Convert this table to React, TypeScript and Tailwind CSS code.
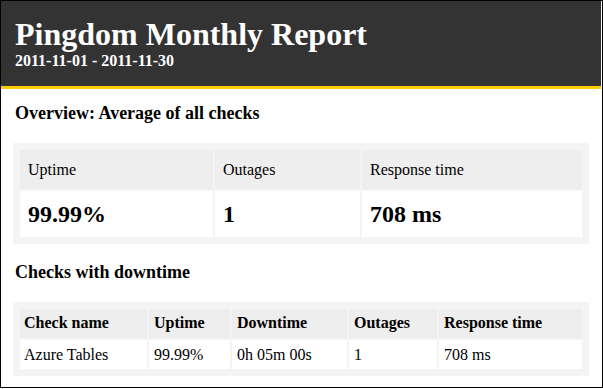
import React from "react";

interface CheckRow {
  name: string;
  uptime: string;
  downtime: string;
  outages: string;
  response: string;
}

const overview = { uptime: "99.99%", outages: "1", response: "708 ms" };

const checks: CheckRow[] = [
  { name: "Azure Tables", uptime: "99.99%", downtime: "0h 05m 00s", outages: "1", response: "708 ms" },
];

export default function App() {
  return (
    <div className="w-[603px] h-[388px] border border-black bg-white text-black font-[family-name:Liberation_Serif,Times_New_Roman,serif] overflow-hidden">
      {/* header */}
      <div className="mr-[1px] bg-[#333333] border-b-[3px] border-[#ffcc00] pl-[14px] pt-[15px] pb-[16px] text-white">
        <h1 className="text-[32px] leading-[36px] font-bold">Pingdom Monthly Report</h1>
        <p className="text-[16px] leading-[18px] font-bold">2011-11-01 - 2011-11-30</p>
      </div>

      <div className="pl-[12px] pr-[13px]">
        <h2 className="mt-[14px] pl-[2px] text-[18px] leading-[21px] font-bold">
          Overview: Average of all checks
        </h2>
        <div className="mt-[19px] bg-[#f4f4f4] p-[5px]">
          <table className="w-full table-fixed border-separate border-spacing-[2px]">
            <thead>
              <tr className="bg-[#eeeeee] text-left">
                <th className="w-[193px] px-[8px] pt-[11px] pb-[10px] text-[16px] leading-[18px] font-normal">Uptime</th>
                <th className="w-[145px] px-[8px] pt-[11px] pb-[10px] text-[16px] leading-[18px] font-normal">Outages</th>
                <th className="px-[8px] pt-[11px] pb-[10px] text-[16px] leading-[18px] font-normal">Response time</th>
              </tr>
            </thead>
            <tbody>
              <tr className="bg-white">
                <td className="px-[8px] py-[9px] text-[24px] leading-[28px] font-bold">{overview.uptime}</td>
                <td className="px-[8px] py-[9px] text-[24px] leading-[28px] font-bold">{overview.outages}</td>
                <td className="px-[8px] py-[9px] text-[24px] leading-[28px] font-bold">{overview.response}</td>
              </tr>
            </tbody>
          </table>
        </div>

        <h2 className="mt-[18px] pl-[2px] text-[18px] leading-[21px] font-bold">Checks with downtime</h2>
        <div className="mt-[19px] bg-[#f4f4f4] p-[5px]">
          <table className="w-full table-fixed border-separate border-spacing-[2px] text-[16px] leading-[18px]">
            <thead>
              <tr className="bg-[#eeeeee] text-left">
                <th className="w-[127px] px-[4px] pt-[5px] pb-[6px] font-bold">Check name</th>
                <th className="w-[81px] px-[5px] pt-[5px] pb-[6px] font-bold">Uptime</th>
                <th className="w-[115px] px-[5px] pt-[5px] pb-[6px] font-bold">Downtime</th>
                <th className="w-[88px] px-[5px] pt-[5px] pb-[6px] font-bold">Outages</th>
                <th className="px-[5px] pt-[5px] pb-[6px] font-bold">Response time</th>
              </tr>
            </thead>
            <tbody>
              {checks.map((c, i) => (
                <tr key={i} className="bg-white">
                  <td className="px-[4px] pt-[6px] pb-[5px]">{c.name}</td>
                  <td className="px-[5px] pt-[6px] pb-[5px]">{c.uptime}</td>
                  <td className="px-[5px] pt-[6px] pb-[5px]">{c.downtime}</td>
                  <td className="px-[5px] pt-[6px] pb-[5px]">{c.outages}</td>
                  <td className="px-[5px] pt-[6px] pb-[5px]">{c.response}</td>
                </tr>
              ))}
            </tbody>
          </table>
        </div>
      </div>
    </div>
  );
}
